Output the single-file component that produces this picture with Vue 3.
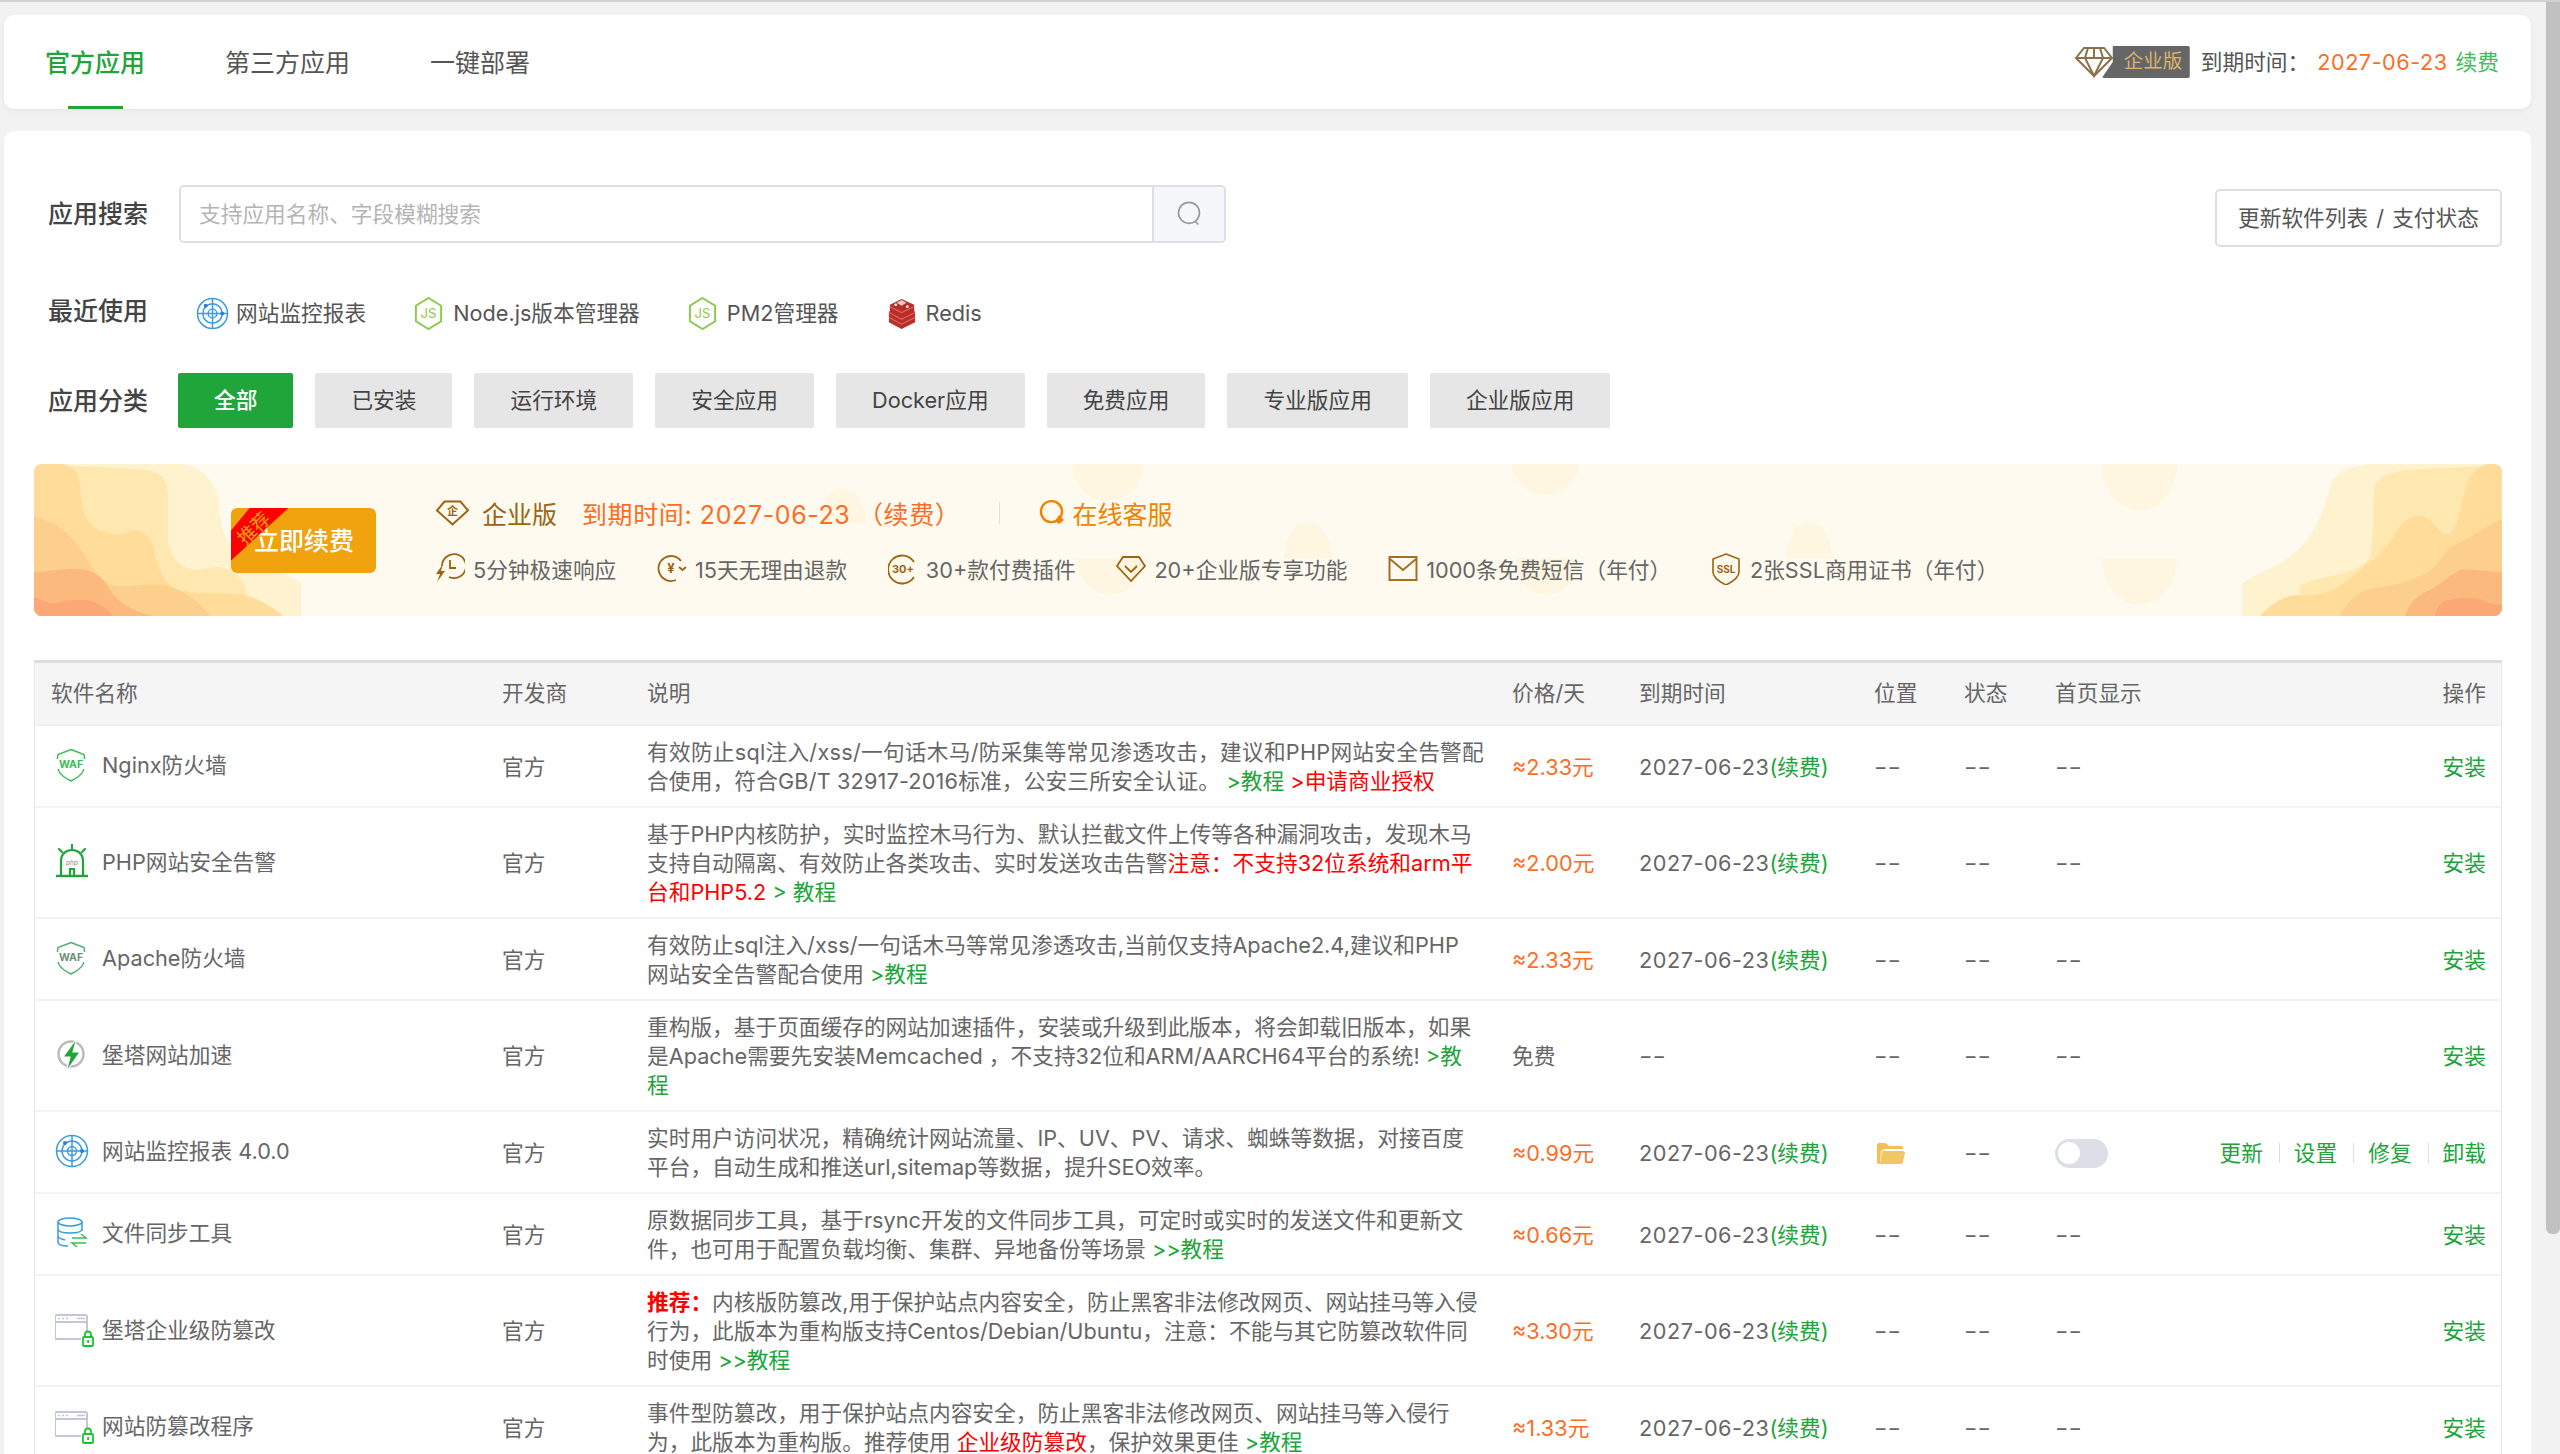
<script setup>
import { ref } from 'vue';

const tabs = ['官方应用', '第三方应用', '一键部署'];
const categories = ['全部', '已安装', '运行环境', '安全应用', 'Docker应用', '免费应用', '专业版应用', '企业版应用'];
const recent = [
    { icon: 'monitor', name: '网站监控报表' },
    { icon: 'node', name: 'Node.js版本管理器' },
    { icon: 'node', name: 'PM2管理器' },
    { icon: 'redis', name: 'Redis' },
];
const perks = [
    { icon: 'bolt', text: '5分钟极速响应' },
    { icon: 'yen', text: '15天无理由退款' },
    { icon: 'plus', text: '30+款付费插件' },
    { icon: 'gem', text: '20+企业版专享功能' },
    { icon: 'mail', text: '1000条免费短信（年付）' },
    { icon: 'ssl', text: '2张SSL商用证书（年付）' },
];

const icons = {
    waf: '<path d="M16 1.5 29 6.5c1 5 1 12-1 17-2 4-7 7-12 9.500-5-2.500-10-5.500-12-9.500-2-5-2-12-1-17Z" fill="none" stroke="#3dbb58" stroke-width="1.400"/><rect x="0" y="11" width="32" height="10" fill="#fff"/><text x="16" y="20" text-anchor="middle" font-size="10.500" font-weight="700" font-family="Inter" fill="#3dbb58">WAF</text>',
    wafGray: '<path d="M16 1.500 29 6.500c1 5 1 12-1 17-2 4-7 7-12 9.500-5-2.500-10-5.500-12-9.500-2-5-2-12-1-17Z" fill="none" stroke="#4fae6a" stroke-width="1.400"/><rect x="0" y="11" width="32" height="10" fill="#fff"/><text x="16" y="20" text-anchor="middle" font-size="10.500" font-weight="700" font-family="Inter" fill="#6f8f78">WAF</text>',
    php: '<g fill="none" stroke="#20a53a" stroke-width="2.200"><path d="M6 31V17C6 10 11 6 17 6s11 4 11 11v14"/><path d="M1 32h32" stroke-width="2.400"/><path d="M15 31v-6h4v6"/><path d="M17 1v4M4 5l3 3M30 5l-3 3" stroke-linecap="round"/></g><text x="17" y="21" text-anchor="middle" font-size="6.500" font-style="italic" font-family="Inter" fill="#888">php</text>',
    speed: '<circle cx="16" cy="17" r="12.500" fill="none" stroke="#bbb" stroke-width="2.500"/><path d="M22 1 8 20h7l-4 15 14-20h-7Z" fill="#20a53a" stroke="#fff" stroke-width="1.200"/>',
    monitor: '<g fill="none" stroke="#3a9ce0" stroke-width="1.500"><circle cx="17" cy="17" r="15.500"/><circle cx="17" cy="17" r="10"/><circle cx="17" cy="17" r="4.500"/><path d="M1.500 17h31M17 1.500v31"/></g><circle cx="10" cy="9" r="2" fill="#2a7fd0"/><circle cx="27" cy="17" r="2" fill="#2a7fd0"/>',
    sync: '<g fill="none" stroke="#3a9ce0" stroke-width="1.500"><ellipse cx="15" cy="6" rx="12" ry="4"/><path d="M3 6v20c0 3 5 4 10 4M27 6v9M3 13c0 3 5 4 12 4s12-1 12-4M3 20c0 2 3 3 7 4"/></g><path d="M17 22h14l-5-4M31 27H17l5 4" fill="none" stroke="#3dbb58" stroke-width="1.500"/>',
    lock: '<g fill="none" stroke="#c3c6d6" stroke-width="2"><path d="M26 27H2c-1 0-2-1-2-2V5c0-1 1-2 2-2h28c1 0 2 1 2 2v14"/><path d="M0 10h32"/></g><path d="M3 6.500h2M7 6.500h2M11 6.500h2M22 6.500h8" stroke="#c3c6d6" stroke-width="1.500"/><rect x="28" y="25" width="10" height="9" rx="1" fill="none" stroke="#1cc434" stroke-width="1.800"/><path d="M30 25v-2.500a3 3 0 0 1 6 0V25" fill="none" stroke="#1cc434" stroke-width="1.800"/><rect x="32.200" y="28" width="1.800" height="3" fill="#1cc434"/>',
    node: '<path d="M16 1 29 9v16l-13 8L3 25V9Z" fill="none" stroke="#8cc84b" stroke-width="2"/><text x="16" y="22" text-anchor="middle" font-size="13.500" font-family="Inter" fill="#8cc84b">JS</text>',
    redis: '<path d="M16 2 29 8v6l1 2v10L16 33 3 26V16l1-2V8Z" fill="#b72f2a"/><path d="M3 16l13 7 14-7M3 21l13 7 14-7M4 10l12 6 13-6" fill="none" stroke="#e3615a" stroke-width="1.200"/><path d="M16 3l5 3-5 3-5-3Z" fill="#f3c7c5"/><circle cx="10" cy="8" r="1.400" fill="#fff"/><circle cx="22" cy="10" r="1.400" fill="#fff"/>',
    bolt: '<g fill="none" stroke="#9c6410" stroke-width="1.800"><path d="M7 13A12 12 0 1 1 14 24"/><path d="M15 7v8h6"/></g><path d="M8 11 1 21h4l-3 8 8-11H6Z" fill="#9c6410"/>',
    yen: '<g fill="none" stroke="#9c6410" stroke-width="1.800"><path d="M24 8A12.500 12.500 0 1 0 19 27"/><path d="M22 14l3.500 3 3.500-3"/></g><text x="14" y="20" text-anchor="middle" font-size="13" font-weight="700" font-family="Inter" fill="#9c6410">¥</text>',
    plus: '<g fill="none" stroke="#9c6410" stroke-width="1.800"><path d="M26 9A14 14 0 1 0 26 24"/></g><text x="15" y="20" text-anchor="middle" font-size="11" font-weight="700" font-family="Inter" fill="#9c6410">30+</text>',
    gem: '<g fill="none" stroke="#9c6410" stroke-width="1.800"><path d="M7 4h16l6 9-14 15L1 13Z"/><path d="M9 13l6 6 6-6"/></g>',
    mail: '<g fill="none" stroke="#a46f1e" stroke-width="2"><rect x="1.500" y="4" width="27" height="23"/><path d="M2 6l13 11L28 6"/></g>',
    ssl: '<path d="M14 1 27 6v13c0 6-7 10-13 13C8 29 1 25 1 19V6Z" fill="none" stroke="#9c6410" stroke-width="1.600"/><text x="14" y="20" text-anchor="middle" font-size="10" font-weight="700" font-family="Inter" fill="#9c6410">SSL</text>',
};

const price = (v) => '≈' + v + '元';

const rows = [
    {
        icon: 'waf', name: 'Nginx防火墙', price: price('2.33'),
        lines: [
            [['有效防止sql注入/xss/一句话木马/防采集等常见渗透攻击，建议和PHP网站安全告警配', 'wide']],
            [['合使用，符合GB/T 32917-2016标准，公安三所安全认证。 ', 'wider'], ['>教程 ', 'g'], ['>申请商业授权', 'r']],
        ],
    },
    {
        icon: 'php', name: 'PHP网站安全告警', price: price('2.00'),
        lines: [
            [['基于PHP内核防护，实时监控木马行为、默认拦截文件上传等各种漏洞攻击，发现木马']],
            [['支持自动隔离、有效防止各类攻击、实时发送攻击告警'], ['注意：不支持32位系统和arm平', 'r']],
            [['台和PHP5.2 ', 'r'], ['> 教程', 'g']],
        ],
    },
    {
        icon: 'wafGray', name: 'Apache防火墙', price: price('2.33'),
        lines: [
            [['有效防止sql注入/xss/一句话木马等常见渗透攻击,当前仅支持Apache2.4,建议和PHP']],
            [['网站安全告警配合使用 '], ['>教程', 'g']],
        ],
    },
    {
        icon: 'speed', name: '堡塔网站加速', price: '免费', free: true,
        lines: [
            [['重构版，基于页面缓存的网站加速插件，安装或升级到此版本，将会卸载旧版本，如果']],
            [['是Apache需要先安装Memcached ，不支持32位和ARM/AARCH64平台的系统! '], ['>教', 'g']],
            [['程', 'g']],
        ],
    },
    {
        icon: 'monitor', name: '网站监控报表 4.0.0', price: price('0.99'), installed: true,
        lines: [
            [['实时用户访问状况，精确统计网站流量、IP、UV、PV、请求、蜘蛛等数据，对接百度']],
            [['平台，自动生成和推送url,sitemap等数据，提升SEO效率。']],
        ],
    },
    {
        icon: 'sync', name: '文件同步工具', price: price('0.66'),
        lines: [
            [['原数据同步工具，基于rsync开发的文件同步工具，可定时或实时的发送文件和更新文']],
            [['件，也可用于配置负载均衡、集群、异地备份等场景 '], ['>>教程', 'g']],
        ],
    },
    {
        icon: 'lock', name: '堡塔企业级防篡改', price: price('3.30'),
        lines: [
            [['推荐：', 'r b'], ['内核版防篡改,用于保护站点内容安全，防止黑客非法修改网页、网站挂马等入侵']],
            [['行为，此版本为重构版支持Centos/Debian/Ubuntu，注意：不能与其它防篡改软件同']],
            [['时使用 '], ['>>教程', 'g']],
        ],
    },
    {
        icon: 'lock', name: '网站防篡改程序', price: price('1.33'),
        lines: [
            [['事件型防篡改，用于保护站点内容安全，防止黑客非法修改网页、网站挂马等入侵行']],
            [['为，此版本为重构版。推荐使用 '], ['企业级防篡改', 'r'], ['，保护效果更佳 '], ['>教程', 'g']],
        ],
    },
];

const activeTab = ref(0);
const activeCat = ref(0);
</script>

<template>
    <div class="page">
        <div class="scroll-thumb"></div>

        <div class="card tabs-card">
            <div class="tabs">
                <div
                    v-for="(tab, i) in tabs"
                    :key="tab"
                    class="tab"
                    :class="{ active: activeTab === i }"
                    @click="activeTab = i"
                >{{ tab }}</div>
            </div>
            <div class="license">
                <svg class="license-gem" viewBox="0 0 38 32">
                    <g fill="none" stroke="#8d7148" stroke-width="2">
                        <path d="M9 2h20l8 10-18 18L1 12Z"/>
                        <path d="M1 12h36M13 2l-3 10 9 18 9-18-3-10M19 2v10"/>
                    </g>
                </svg>
                <span class="license-badge">企业版</span>
                <span class="license-label">到期时间：</span>
                <span class="license-date">2027-06-23</span>
                <span class="license-renew">续费</span>
            </div>
        </div>

        <div class="card main-card">
            <div class="search-row">
                <div class="row-label">应用搜索</div>
                <div class="search-box">
                    <input class="search-input" placeholder="支持应用名称、字段模糊搜索" />
                    <div class="search-btn">
                        <svg viewBox="0 0 24 24" width="28" height="28">
                            <circle cx="12" cy="11" r="9" fill="none" stroke="#999" stroke-width="1.400"/>
                            <path d="M17 18l3 3" stroke="#999" stroke-width="1.400"/>
                        </svg>
                    </div>
                </div>
                <button class="update-btn">更新软件列表 / 支付状态</button>
            </div>

            <div class="recent-row">
                <div class="row-label recent-label">最近使用</div>
                <div v-for="item in recent" :key="item.name" class="recent-item">
                    <svg class="recent-icon" viewBox="0 0 34 34" v-html="icons[item.icon]"></svg>
                    <span>{{ item.name }}</span>
                </div>
            </div>

            <div class="cat-row">
                <div class="row-label">应用分类</div>
                <div class="cats">
                    <div
                        v-for="(cat, i) in categories"
                        :key="cat"
                        class="cat"
                        :class="{ active: activeCat === i }"
                        @click="activeCat = i"
                    >{{ cat }}</div>
                </div>
            </div>

            <div class="banner">
                <svg class="banner-bg" viewBox="0 0 2468 152" preserveAspectRatio="none">
                    <g fill="#fff6e2">
                        <path d="M786 59a23 35 0 0 1 46 0ZM1250 94a24 36 0 0 1 48 0ZM1752 94a23 36 0 0 1 46 0Z"/>
                        <path d="M1038 0a36 37 0 0 0 72 0ZM1477 0a35 37 0 0 0 69 0ZM2068 0a37 46 0 0 0 75 0Z"/>
                        <path d="M1043 94a33 37 0 0 0 66 0ZM1481 94a31 37 0 0 0 62 0ZM2068 94a37 46 0 0 0 75 0Z"/>
                    </g>
                    <path fill="#fff3cf" d="M0 0H149C170 4 183 20 185 42C186 70 200 95 225 105L253 111L267 119V152H0Z"/>
                    <path fill="#ffe7b0" d="M0 0C40 2 90 4 112 6C128 8 134 16 134 30V78C136 92 146 104 160 106C172 106 180 101 190 104C205 110 212 120 213 132V152H0Z"/>
                    <path fill="#ffdc9a" d="M0 0H29C40 3 46 10 46 22C47 35 47 45 52 54C60 68 80 74 94 68C105 64 115 70 119 82C122 95 124 108 136 121C150 132 175 128 205 130C225 134 240 144 249 152H0Z"/>
                    <path fill="#fdcf8c" d="M0 53C20 56 38 70 50 90C60 108 66 118 82 122C100 124 120 116 140 124C155 130 168 140 176 152H0Z"/>
                    <path fill="#fcb97e" d="M0 108C15 108 30 104 44 105C60 106 68 112 76 126C83 138 100 148 119 152H0Z"/>
                    <path fill="#fba776" d="M0 133C8 136 14 140 22 139C35 135 55 134 64 140C72 144 76 148 78 152H0Z"/>
                    <g transform="translate(2202 0)">
                        <path fill="#fff3cf" d="M6 152V120C20 108 40 104 54 93C75 78 88 50 95 20C100 4 125 0 144 0H266V152Z"/>
                        <path fill="#ffe7b0" d="M64 152V122C85 110 125 112 134 93C140 60 136 40 139 22C145 8 165 6 184 5C220 4 250 2 266 0V152Z"/>
                        <path fill="#ffdc9a" d="M24 152C35 140 50 130 64 131C85 132 100 130 130 100C145 92 152 82 159 70C165 58 178 48 189 53C200 60 205 72 214 70C224 60 226 30 234 13C240 5 248 0 254 0H266V152Z"/>
                        <path fill="#fdcf8c" d="M104 152C115 130 130 124 144 123C170 120 195 110 204 96C215 80 225 78 234 73C245 66 255 60 266 55V152Z"/>
                        <path fill="#fcb97e" d="M169 152C175 135 185 130 194 126C205 120 212 112 224 106C238 104 252 108 266 108V152Z"/>
                        <path fill="#fba776" d="M199 152C201 142 206 136 214 136C225 133 238 134 244 135C250 138 258 142 266 140V152Z"/>
                    </g>
                </svg>

                <button class="renew-btn">
                    <span class="ribbon"><span>推荐</span></span>
                    立即续费
                </button>

                <div class="banner-info">
                    <div class="banner-top">
                        <svg class="ent-icon" viewBox="0 0 34 26">
                            <path d="M9 1.500h16l7.500 9L17 24.500 1.500 10.500Z" fill="none" stroke="#9c6410" stroke-width="2"/>
                            <text x="17" y="15" text-anchor="middle" font-size="11" font-weight="700" font-family='"Noto Sans CJK SC"' fill="#9c6410">企</text>
                        </svg>
                        <span class="ent-name">企业版</span>
                        <span class="ent-date">到期时间: 2027-06-23 （续费）</span>
                        <span class="ent-sep"></span>
                        <svg class="chat-icon" viewBox="0 0 28 26">
                            <path d="M21 19A10.500 10.500 0 1 1 24 12c0 2-.6 3.600-1.500 5" fill="none" stroke="#f08300" stroke-width="2.400"/>
                            <path d="M21 15l5 5-5 4-4-3Z" fill="#f08300"/>
                        </svg>
                        <span class="ent-chat">在线客服</span>
                    </div>
                    <div class="banner-perks">
                        <div v-for="perk in perks" :key="perk.text" class="perk">
                            <svg class="perk-icon" viewBox="0 0 30 32" v-html="icons[perk.icon]"></svg>
                            <span>{{ perk.text }}</span>
                        </div>
                    </div>
                </div>
            </div>

            <table class="soft-table">
                <colgroup>
                    <col class="c-name" />
                    <col class="c-dev" />
                    <col class="c-desc" />
                    <col class="c-price" />
                    <col class="c-date" />
                    <col class="c-pos" />
                    <col class="c-state" />
                    <col class="c-home" />
                    <col />
                </colgroup>
                <thead>
                    <tr>
                        <th>软件名称</th>
                        <th>开发商</th>
                        <th>说明</th>
                        <th>价格/天</th>
                        <th>到期时间</th>
                        <th>位置</th>
                        <th>状态</th>
                        <th>首页显示</th>
                        <th class="right">操作</th>
                    </tr>
                </thead>
                <tbody>
                    <tr v-for="row in rows" :key="row.name">
                        <td>
                            <div class="soft-name">
                                <svg class="soft-icon" viewBox="0 0 40 36" v-html="icons[row.icon]"></svg>
                                <span>{{ row.name }}</span>
                            </div>
                        </td>
                        <td>官方</td>
                        <td>
                            <div v-for="(line, i) in row.lines" :key="i" class="desc-line">
                                <span v-for="(seg, j) in line" :key="j" :class="seg[1]">{{ seg[0] }}</span>
                            </div>
                        </td>
                        <td :class="{ orange: !row.free }">{{ row.price }}</td>
                        <td>
                            <span v-if="row.free" class="dash">--</span>
                            <template v-else><span class="date">2027-06-23</span><span class="g">(续费)</span></template>
                        </td>
                        <td>
                            <svg v-if="row.installed" class="folder" viewBox="0 0 28 21">
                                <path d="M0 2c0-1 .6-2 2-2h7l3 3h12c1 0 2 1 2 2v1H8L4 8 3 21H2c-1 0-2-1-2-2Z" fill="#f3c14f"/>
                                <path d="M5 8h21c1 0 2 1 2 2l-2 9c0 1-1 2-2 2H3Z" fill="#f0c667"/>
                            </svg>
                            <span v-else class="dash">--</span>
                        </td>
                        <td><span class="dash">--</span></td>
                        <td>
                            <div v-if="row.installed" class="toggle"><span class="knob"></span></div>
                            <span v-else class="dash">--</span>
                        </td>
                        <td class="right">
                            <div v-if="row.installed" class="ops">
                                <a class="g">更新</a><i class="sep"></i>
                                <a class="g">设置</a><i class="sep"></i>
                                <a class="g">修复</a><i class="sep"></i>
                                <a class="g">卸载</a>
                            </div>
                            <a v-else class="g">安装</a>
                        </td>
                    </tr>
                </tbody>
            </table>
        </div>
    </div>
</template>

<style scoped>
.page {
    position: relative;
    box-sizing: border-box;
    height: 1454px;
    overflow: hidden;
    padding: 13px 29px 0 4px;
    border-top: 2px solid #d2d2d2;
    background-color: #f2f2f2;
    font-family: "Inter", "Noto Sans CJK SC", sans-serif;
    font-size: 21.7px;
    color: #666;
}

.scroll-thumb {
    position: absolute;
    top: -2px;
    right: 0;
    width: 14px;
    height: 1234px;
    background-color: #c1c1c1;
    border-radius: 0 0 6px 6px;
}

.card {
    background-color: #fff;
    border-radius: 10px;
}

.tabs-card {
    display: flex;
    align-items: center;
    justify-content: space-between;
    height: 94px;
    padding: 0 32px 0 41px;
    box-shadow: 0 2px 6px rgba(0, 0, 0, 0.05);
}

.tabs {
    display: flex;
    gap: 80px;
    height: 100%;
}

.tab {
    position: relative;
    display: flex;
    align-items: center;
    padding-bottom: 3px;
    box-sizing: border-box;
    font-size: 25px;
    color: #555;
    cursor: pointer;
}

.tab.active {
    color: #20a53a;
    font-weight: 500;
}

.tab.active::after {
    content: '';
    position: absolute;
    left: 23px;
    bottom: 0;
    width: 55px;
    height: 3px;
    background-color: #20a53a;
}

.license {
    display: flex;
    align-items: center;
}

.license-gem {
    width: 38px;
    height: 32px;
    position: relative;
    z-index: 1;
}

.license-badge {
    box-sizing: border-box;
    width: 88px;
    height: 32px;
    margin-left: -11px;
    padding-left: 22px;
    line-height: 31px;
    font-size: 19.5px;
    color: #d9b36f;
    background-color: #666;
    border-radius: 2px;
    clip-path: polygon(11px 0, 100% 0, 100% 100%, 0 100%, 11px 16px);
}

.license-label {
    margin: -3px 0 0 11px;
    color: #555;
}

.license-date {
    margin-left: 8px;
    color: #fc6d26;
    letter-spacing: 0.5px;
}

.license-renew {
    margin: -3px 0 0 8px;
    color: #3cc057;
}

.main-card {
    margin-top: 22px;
    padding: 54px 29px 0 30px;
    height: 1400px;
}

.row-label {
    flex: none;
    box-sizing: border-box;
    width: 145px;
    padding-left: 14px;
    font-size: 25px;
    font-weight: 500;
    color: #444;
}

.search-row {
    display: flex;
    align-items: flex-start;
}

.search-row .row-label {
    line-height: 58px;
}

.search-box {
    display: flex;
    width: 1047px;
    height: 58px;
    box-sizing: border-box;
    border: 2px solid #dcdfe6;
    border-radius: 5px;
    overflow: hidden;
}

.search-input {
    flex: 1;
    min-width: 0;
    border: 0;
    outline: 0;
    padding: 0 18px;
    font: inherit;
    color: #666;
}

.search-input::placeholder {
    color: #b4b4b4;
}

.search-btn {
    display: flex;
    align-items: center;
    justify-content: center;
    width: 70px;
    background-color: #f5f7fa;
    border-left: 2px solid #dcdfe6;
}

.update-btn {
    margin: 4px 0 0 auto;
    height: 58px;
    width: 287px;
    padding: 0 0 4px;
    border: 2px solid #dcdfe6;
    border-radius: 5px;
    background-color: #fff;
    font: inherit;
    color: #555;
    word-spacing: 2px;
}

.recent-row {
    display: flex;
    align-items: center;
    margin-top: 50px;
    height: 32px;
}

.recent-label {
    position: relative;
    top: -4px;
    width: 162px;
}

.recent-item {
    display: flex;
    align-items: center;
    gap: 7px;
    margin-right: 47px;
    color: #555;
    line-height: 32px;
}

.recent-icon {
    width: 33px;
    height: 33px;
}

.cat-row {
    display: flex;
    align-items: center;
    margin-top: 44px;
}

.cat-row .row-label {
    width: 144px;
    margin-top: -3px;
}

.cats {
    display: flex;
    gap: 22px;
}

.cat {
    padding: 0 36px;
    line-height: 55px;
    background-color: #e6e6e6;
    color: #444;
    border-radius: 2px;
}

.cat.active {
    background-color: #20a53a;
    color: #fff;
    font-weight: 500;
}

.banner {
    position: relative;
    display: flex;
    align-items: center;
    height: 152px;
    margin-top: 36px;
    padding-left: 197px;
    background-color: #fffaef;
    border-radius: 8px;
    overflow: hidden;
}

.banner-bg {
    position: absolute;
    left: 0;
    top: 0;
    width: 100%;
    height: 100%;
}

.renew-btn {
    position: relative;
    flex: none;
    width: 145px;
    height: 65px;
    margin-right: 59px;
    padding: 0 0 2px 23px;
    border: 0;
    border-radius: 6px;
    background-color: #f0a30e;
    color: #fff;
    font: inherit;
    font-size: 25px;
    font-weight: 500;
    text-align: left;
    overflow: hidden;
}

.ribbon {
    position: absolute;
    left: -20px;
    top: 0;
    width: 78px;
    height: 53px;
    background-color: #f00;
    clip-path: polygon(39px 0, 78px 0, 20px 53px, 20px 23px);
}

.ribbon span {
    position: absolute;
    left: 24px;
    top: 9px;
    font-size: 18.5px;
    line-height: 22px;
    font-weight: 400;
    color: #f0a30e;
    transform: rotate(-45deg);
}

.banner-info {
    position: relative;
    padding-top: 2px;
}

.banner-top {
    display: flex;
    align-items: center;
    font-size: 25px;
    height: 30px;
}

.ent-icon {
    width: 35px;
    height: 26px;
}

.ent-name {
    margin-left: 12px;
    color: #9c6410;
}

.ent-date {
    margin-left: 25px;
    color: #fc6d26;
    letter-spacing: 0.6px;
}

.ent-sep {
    width: 1px;
    height: 22px;
    margin: 0 38px 0 39px;
    background-color: #eadfc8;
}

.chat-icon {
    width: 28px;
    height: 26px;
}

.ent-chat {
    margin-left: 6px;
    color: #f08300;
}

.banner-perks {
    display: flex;
    margin-top: 25px;
}

.perk {
    display: flex;
    align-items: center;
    margin-right: 40.700px;
    color: #666;
}

.perk-icon {
    width: 30px;
    height: 32px;
    margin-right: 8px;
}

.soft-table {
    width: 100%;
    margin-top: 44px;
    table-layout: fixed;
    border-collapse: separate;
    border-spacing: 0;
    border-top: 3px solid #dedede;
    border-left: 1px solid #e8e8e8;
    border-right: 1px solid #e8e8e8;
}

.c-name { width: 451px; }
.c-dev { width: 145px; }
.c-desc { width: 865px; }
.c-price { width: 127px; }
.c-date { width: 235px; }
.c-pos { width: 90px; }
.c-state { width: 91px; }
.c-home { width: 120px; }

th {
    height: 56px;
    padding: 0 15px 5px 16px;
    text-align: left;
    font-weight: 400;
    color: #666;
    background-color: #f5f5f5;
    border-bottom: 2px solid #eef0f4;
}

td {
    padding: 12px 15px 10px 16px;
    line-height: 29px;
    color: #666;
    border-bottom: 2px solid #f1f3f7;
}

th.right,
td.right {
    text-align: right;
}

.soft-name {
    display: flex;
    align-items: center;
    gap: 7px;
    margin: -3px 0 0 4px;
}

.soft-icon {
    flex: none;
    width: 40px;
    height: 36px;
}

.desc-line {
    white-space: nowrap;
}

.wide {
    letter-spacing: 0.25px;
}

.wider {
    letter-spacing: 0.15px;
}

.orange {
    color: #fc6d26;
}

.date {
    letter-spacing: 0.5px;
}

.dash {
    display: inline-block;
    transform: scaleX(1.35);
    transform-origin: left center;
}

.g {
    color: #20a53a;
}

.r {
    color: #f00;
}

.b {
    font-weight: 700;
}

.folder {
    display: block;
    width: 28px;
    height: 21px;
    margin-left: 3px;
}

.toggle {
    display: flex;
    box-sizing: border-box;
    align-items: center;
    width: 53px;
    height: 29px;
    padding: 0 3px;
    background-color: #dcdfe6;
    border-radius: 15px;
}

.knob {
    width: 22px;
    height: 22px;
    border-radius: 50%;
    background-color: #fff;
}

.ops {
    display: flex;
    justify-content: flex-end;
    align-items: center;
}

.sep {
    width: 1px;
    height: 20px;
    margin: 0 14px 0 16px;
    background-color: #ddd;
}
</style>

<style>
html,
body {
    margin: 0;
    overflow: hidden;
}
</style>
